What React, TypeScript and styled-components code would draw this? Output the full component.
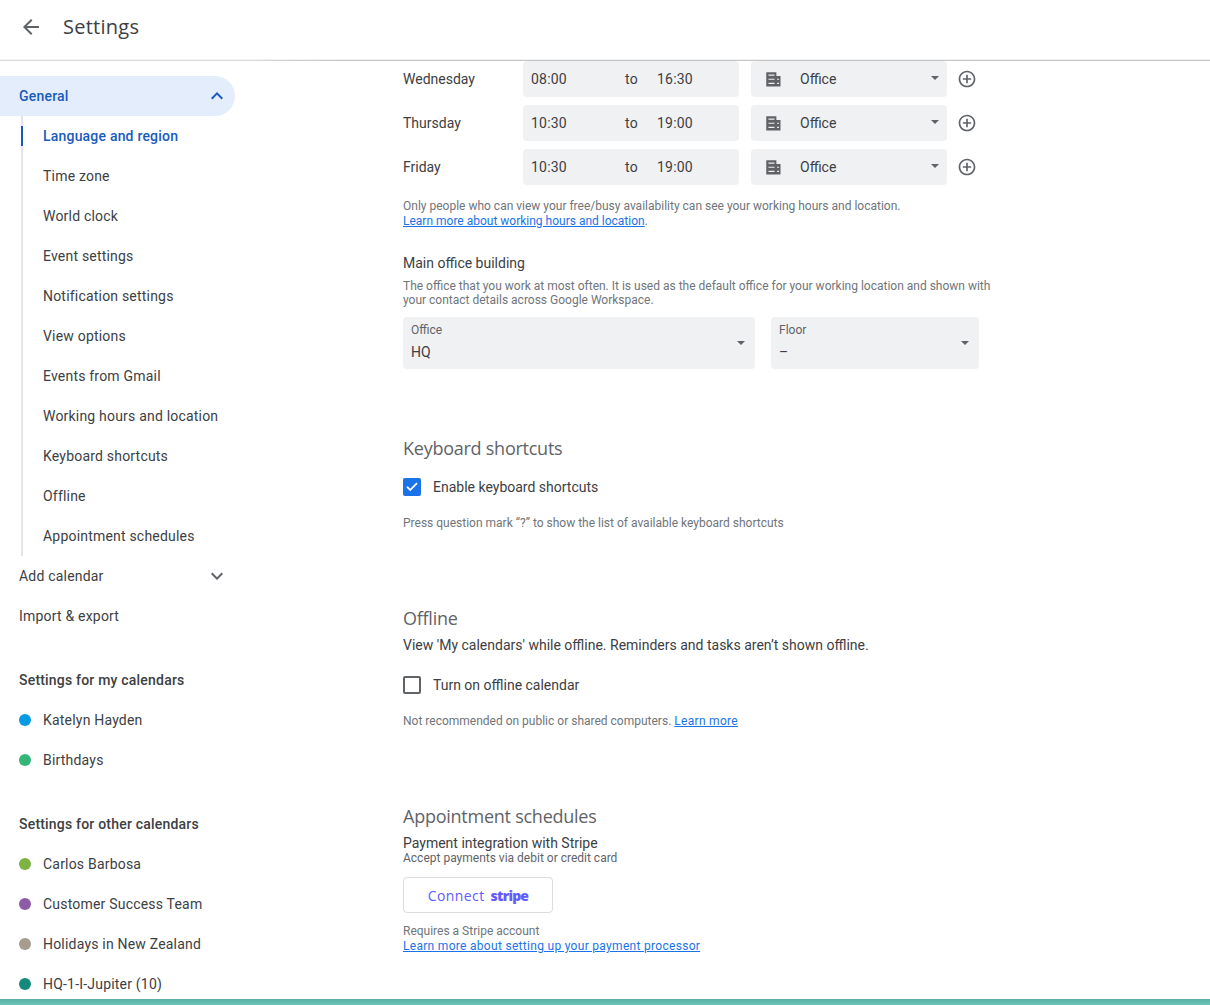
import React from 'react';
import styled, { createGlobalStyle } from 'styled-components';

const GlobalStyle = createGlobalStyle`
    html, body {
        margin: 0;
        height: 100%;
        overflow: hidden;
        background: #fff;
    }

    body {
        font-family: Roboto, "Liberation Sans", sans-serif;
        font-size: 14px;
        color: #3c4043;
    }

    * {
        box-sizing: border-box;
    }
`;

const HEADING_FONT = '"Open Sans", Roboto, sans-serif';

type IconProps = { d: string; size?: number };

const Icon = ({ d, size = 24 }: IconProps) => (
    <svg width={size} height={size} viewBox="0 0 24 24" fill="currentColor" fillRule="evenodd" aria-hidden="true">
        <path d={d} />
    </svg>
);

const ICONS = {
    back: 'M20 11H7.83l5.59-5.59L12 4l-8 8 8 8 1.41-1.41L7.83 13H20v-2z',
    less: 'M12 8l-6 6 1.41 1.41L12 10.83l4.59 4.58L18 14z',
    more: 'M16.59 8.59L12 13.17 7.41 8.59 6 10l6 6 6-6z',
    plus: 'M13 7h-2v4H7v2h4v4h2v-4h4v-2h-4V7zm-1-5C6.48 2 2 6.48 2 12s4.48 10 10 10 10-4.48 10-10S17.52 2 12 2zm0 18c-4.41 0-8-3.59-8-8s3.59-8 8-8 8 3.59 8 8-3.59 8-8 8z',
    building: 'M3 3h13.500v5H22v14H3V3zm3 3v1.500h8V6H6zm0 5.500V13h8v-1.500H6zm11.500 0V13H20v-1.500h-2.500zM6 17v1.500h8V17H6zm11.500 0v1.500H20V17h-2.500z',
    check: 'M9.550 17.600L4.400 12.450l1.700-1.700 3.450 3.450 8.350-8.350 1.700 1.700z',
};

const subItems = [
    'Language and region',
    'Time zone',
    'World clock',
    'Event settings',
    'Notification settings',
    'View options',
    'Events from Gmail',
    'Working hours and location',
    'Keyboard shortcuts',
    'Offline',
    'Appointment schedules',
];

const myCalendars = [
    { name: 'Katelyn Hayden', color: '#039be5' },
    { name: 'Birthdays', color: '#33b679' },
];

const otherCalendars = [
    { name: 'Carlos Barbosa', color: '#7cb342' },
    { name: 'Customer Success Team', color: '#8e5ba6' },
    { name: 'Holidays in New Zealand', color: '#a79b8e' },
    { name: 'HQ-1-I-Jupiter (10)', color: '#158a7c' },
];

const days = [
    { day: 'Wednesday', from: '08:00', to: '16:30' },
    { day: 'Thursday', from: '10:30', to: '19:00' },
    { day: 'Friday', from: '10:30', to: '19:00' },
];

export default function App() {
    return (
        <Page>
            <GlobalStyle />
            <Header>
                <BackButton>
                    <Icon d={ICONS.back} />
                </BackButton>
                <PageTitle>Settings</PageTitle>
            </Header>
            <Body>
                <Sidebar>
                    <GeneralRow>
                        General
                        <Icon d={ICONS.less} />
                    </GeneralRow>
                    <SubList>
                        {subItems.map((item, i) => (
                            <SubItem key={item} $active={i === 0}>
                                {item}
                            </SubItem>
                        ))}
                    </SubList>
                    <NavRow>
                        Add calendar
                        <Icon d={ICONS.more} />
                    </NavRow>
                    <NavRow>Import &amp; export</NavRow>
                    <GroupTitle>Settings for my calendars</GroupTitle>
                    {myCalendars.map((c) => (
                        <CalendarRow key={c.name}>
                            <Dot $color={c.color} />
                            {c.name}
                        </CalendarRow>
                    ))}
                    <GroupTitle>Settings for other calendars</GroupTitle>
                    {otherCalendars.map((c) => (
                        <CalendarRow key={c.name}>
                            <Dot $color={c.color} />
                            {c.name}
                        </CalendarRow>
                    ))}
                </Sidebar>
                <Main>
                    <HoursList>
                        {days.map((d) => (
                            <HoursRow key={d.day}>
                                <DayLabel>{d.day}</DayLabel>
                                <TimeField>
                                    <TimeValue>{d.from}</TimeValue>
                                    <TimeTo>to</TimeTo>
                                    <span>{d.to}</span>
                                </TimeField>
                                <LocationField>
                                    <BuildingIcon>
                                        <Icon d={ICONS.building} size={18} />
                                    </BuildingIcon>
                                    Office
                                    <Caret />
                                </LocationField>
                                <AddIcon>
                                    <Icon d={ICONS.plus} size={20} />
                                </AddIcon>
                            </HoursRow>
                        ))}
                    </HoursList>
                    <HoursNote>
                        Only people who can view your free/busy availability can see your working hours and location.
                        <br />
                        <NoteLink>Learn more about working hours and location</NoteLink>.
                    </HoursNote>
                    <OfficeTitle>Main office building</OfficeTitle>
                    <OfficeNote>
                        The office that you work at most often. It is used as the default office for your working location and shown with
                        <br />
                        your contact details across Google Workspace.
                    </OfficeNote>
                    <SelectRow>
                        <SelectBox $width={352}>
                            <SelectLabel>Office</SelectLabel>
                            <SelectValue>HQ</SelectValue>
                            <SelectCaret />
                        </SelectBox>
                        <SelectBox $width={208}>
                            <SelectLabel>Floor</SelectLabel>
                            <SelectValue>–</SelectValue>
                            <SelectCaret />
                        </SelectBox>
                    </SelectRow>

                    <KeyboardHeading>Keyboard shortcuts</KeyboardHeading>
                    <CheckRow>
                        <CheckedBox>
                            <Icon d={ICONS.check} size={18} />
                        </CheckedBox>
                        Enable keyboard shortcuts
                    </CheckRow>
                    <KeyboardNote>Press question mark “?” to show the list of available keyboard shortcuts</KeyboardNote>

                    <OfflineHeading>Offline</OfflineHeading>
                    <OfflineText>View 'My calendars' while offline. Reminders and tasks aren’t shown offline.</OfflineText>
                    <OfflineCheckRow>
                        <EmptyBox />
                        Turn on offline calendar
                    </OfflineCheckRow>
                    <OfflineNote>
                        Not recommended on public or shared computers. <WideLink>Learn more</WideLink>
                    </OfflineNote>

                    <AppointmentHeading>Appointment schedules</AppointmentHeading>
                    <StripeTitle>Payment integration with Stripe</StripeTitle>
                    <StripeText>Accept payments via debit or credit card</StripeText>
                    <ConnectButton>
                        <ConnectLabel>Connect</ConnectLabel>
                        <StripeMark>stripe</StripeMark>
                    </ConnectButton>
                    <StripeNote>
                        Requires a Stripe account
                        <br />
                        <WideLink>Learn more about setting up your payment processor</WideLink>
                    </StripeNote>
                </Main>
            </Body>
            <BottomBar />
        </Page>
    );
}

const Page = styled.div`
    display: flex;
    flex-direction: column;
    height: 100vh;
    overflow: hidden;
`;

const Header = styled.header`
    flex: none;
    display: flex;
    align-items: center;
    height: 61px;
    padding: 0 0 7px 19px;
    border-bottom: 1px solid;
    border-image: linear-gradient(90deg, #dadada 0, #dadada 250px, #c4c4c4 340px, #c4c4c4 100%) 1;
    box-shadow: inset 0 -1px 0 rgba(0, 0, 0, 0.05);
`;

const BackButton = styled.div`
    display: flex;
    width: 24px;
    color: #5f6368;
`;

const PageTitle = styled.h1`
    margin: 0 0 0 20px;
    font-family: ${HEADING_FONT};
    font-size: 20px;
    font-weight: 400;
    letter-spacing: 0.25px;
    color: #3c4043;
`;

const Body = styled.div`
    flex: 1;
    min-height: 0;
    display: flex;
    overflow: hidden;
`;

const Sidebar = styled.nav`
    flex: none;
    width: 403px;
    padding-top: 15px;
    letter-spacing: 0.2px;
`;

const NavRow = styled.div`
    display: flex;
    align-items: center;
    justify-content: space-between;
    width: 235px;
    height: 40px;
    padding: 0 6px 0 19px;
    color: #3c4043;

    svg {
        color: #5f6368;
    }
`;

const GeneralRow = styled(NavRow)`
    background: #e4edfc;
    border-radius: 0 20px 20px 0;
    color: #185abc;
    font-weight: 500;

    svg {
        color: #185abc;
    }
`;

const SubList = styled.div`
    margin: 0 0 0 21px;
    padding: 0;
    border-left: 2px solid #e3e5ea;
`;

const SubItem = styled.div<{ $active?: boolean }>`
    position: relative;
    display: flex;
    align-items: center;
    height: 40px;
    padding-left: 20px;
    color: ${(p) => (p.$active ? '#185abc' : '#3c4043')};
    font-weight: ${(p) => (p.$active ? 500 : 400)};

    &::before {
        content: ${(p) => (p.$active ? '""' : 'none')};
        position: absolute;
        left: -2px;
        top: 10px;
        width: 2px;
        height: 20px;
        background: #185abc;
    }
`;

const GroupTitle = styled.div`
    display: flex;
    align-items: center;
    height: 40px;
    margin-top: 24px;
    padding-left: 19px;
    font-weight: 500;
    color: #3c4043;
`;

const CalendarRow = styled.div`
    display: flex;
    align-items: center;
    height: 40px;
    padding-left: 19px;
`;

const Dot = styled.span<{ $color: string }>`
    width: 12px;
    height: 12px;
    margin-right: 12px;
    border-radius: 50%;
    background: ${(p) => p.$color};
`;

const Main = styled.main`
    flex: 1;
    min-width: 0;
`;

const HoursList = styled.div`
    display: flex;
    flex-direction: column;
    gap: 8px;
`;

const HoursRow = styled.div`
    display: flex;
    align-items: center;
    height: 36px;
`;

const DayLabel = styled.div`
    width: 120px;
`;

const TimeField = styled.div`
    display: flex;
    align-items: center;
    width: 216px;
    height: 36px;
    padding-left: 8px;
    background: #f0f1f3;
    border-radius: 4px;
    letter-spacing: 0.2px;
`;

const TimeValue = styled.span`
    width: 94px;
`;

const TimeTo = styled.span`
    width: 32px;
`;

const LocationField = styled.div`
    position: relative;
    display: flex;
    align-items: center;
    width: 196px;
    height: 36px;
    margin-left: 12px;
    background: #f0f1f3;
    border-radius: 4px;
`;

const BuildingIcon = styled.span`
    display: flex;
    margin: 0 18px 0 13px;
    color: #5f6368;
`;

const Caret = styled.span`
    position: absolute;
    right: 8px;
    top: 15px;
    border-left: 4px solid transparent;
    border-right: 4px solid transparent;
    border-top: 4px solid #5f6368;
`;

const AddIcon = styled.span`
    display: flex;
    margin-left: 10px;
    color: #5f6368;
`;

const Note = styled.div`
    font-size: 12px;
    line-height: 14px;
    color: #70757a;
`;

const NoteLink = styled.a`
    color: #1a73e8;
    text-decoration: underline;
`;

const WideLink = styled(NoteLink)`
    letter-spacing: 0.3px;
`;

const HoursNote = styled(Note)`
    margin-top: 14px;
    line-height: 14.5px;
`;

const OfficeTitle = styled.div`
    margin-top: 25px;
    line-height: 20px;
`;

const OfficeNote = styled(Note)`
    margin-top: 6px;
`;

const SelectRow = styled.div`
    display: flex;
    gap: 16px;
    margin-top: 10px;
`;

const SelectBox = styled.div<{ $width: number }>`
    position: relative;
    width: ${(p) => p.$width}px;
    height: 52px;
    padding: 6px 8px 0;
    background: #f0f1f3;
    border-radius: 4px;
`;

const SelectLabel = styled.div`
    font-size: 12px;
    line-height: 14px;
    color: #5f6368;
`;

const SelectValue = styled.div`
    margin-top: 5px;
    line-height: 20px;
`;

const SelectCaret = styled(Caret)`
    right: 10px;
    top: 24px;
`;

const Heading = styled.h2`
    margin: 0;
    font-family: ${HEADING_FONT};
    font-size: 18px;
    font-weight: 400;
    line-height: 24px;
    letter-spacing: -0.25px;
    color: #5f6368;
`;

const KeyboardHeading = styled(Heading)`
    margin-top: 67px;
`;

const CheckRow = styled.div`
    display: flex;
    align-items: center;
    gap: 12px;
    height: 20px;
    margin-top: 17px;
`;

const CheckedBox = styled.span`
    display: flex;
    align-items: center;
    justify-content: center;
    width: 18px;
    height: 18px;
    background: #1a73e8;
    border-radius: 2px;
    color: #fff;
`;

const EmptyBox = styled.span`
    width: 18px;
    height: 18px;
    border: 2px solid #5f6368;
    border-radius: 2px;
`;

const KeyboardNote = styled(Note)`
    margin-top: 19px;
`;

const OfflineHeading = styled(Heading)`
    margin-top: 76px;
`;

const OfflineText = styled.div`
    margin-top: 5px;
    line-height: 20px;
`;

const OfflineCheckRow = styled(CheckRow)`
    margin-top: 20px;
`;

const OfflineNote = styled(Note)`
    margin-top: 19px;
`;

const AppointmentHeading = styled(Heading)`
    margin-top: 76px;
`;

const StripeTitle = styled.div`
    margin-top: 7px;
    line-height: 16px;
`;

const StripeText = styled(Note)`
    color: #5f6368;
`;

const ConnectButton = styled.div`
    display: flex;
    align-items: center;
    justify-content: center;
    gap: 6px;
    width: 150px;
    height: 36px;
    margin-top: 12px;
    border: 1px solid #dadce0;
    border-radius: 4px;
    color: #635bff;
`;

const ConnectLabel = styled.span`
    font-family: ${HEADING_FONT};
    font-size: 14px;
    letter-spacing: 0.4px;
`;

const StripeMark = styled.span`
    font-family: "Open Sans", sans-serif;
    font-size: 14px;
    font-weight: 800;
    letter-spacing: -0.8px;
`;

const StripeNote = styled(Note)`
    margin-top: 11px;
    line-height: 15px;
`;

const BottomBar = styled.div`
    flex: none;
    height: 6px;
    background: linear-gradient(#5cb0a6, #6cc4b9);
`;
